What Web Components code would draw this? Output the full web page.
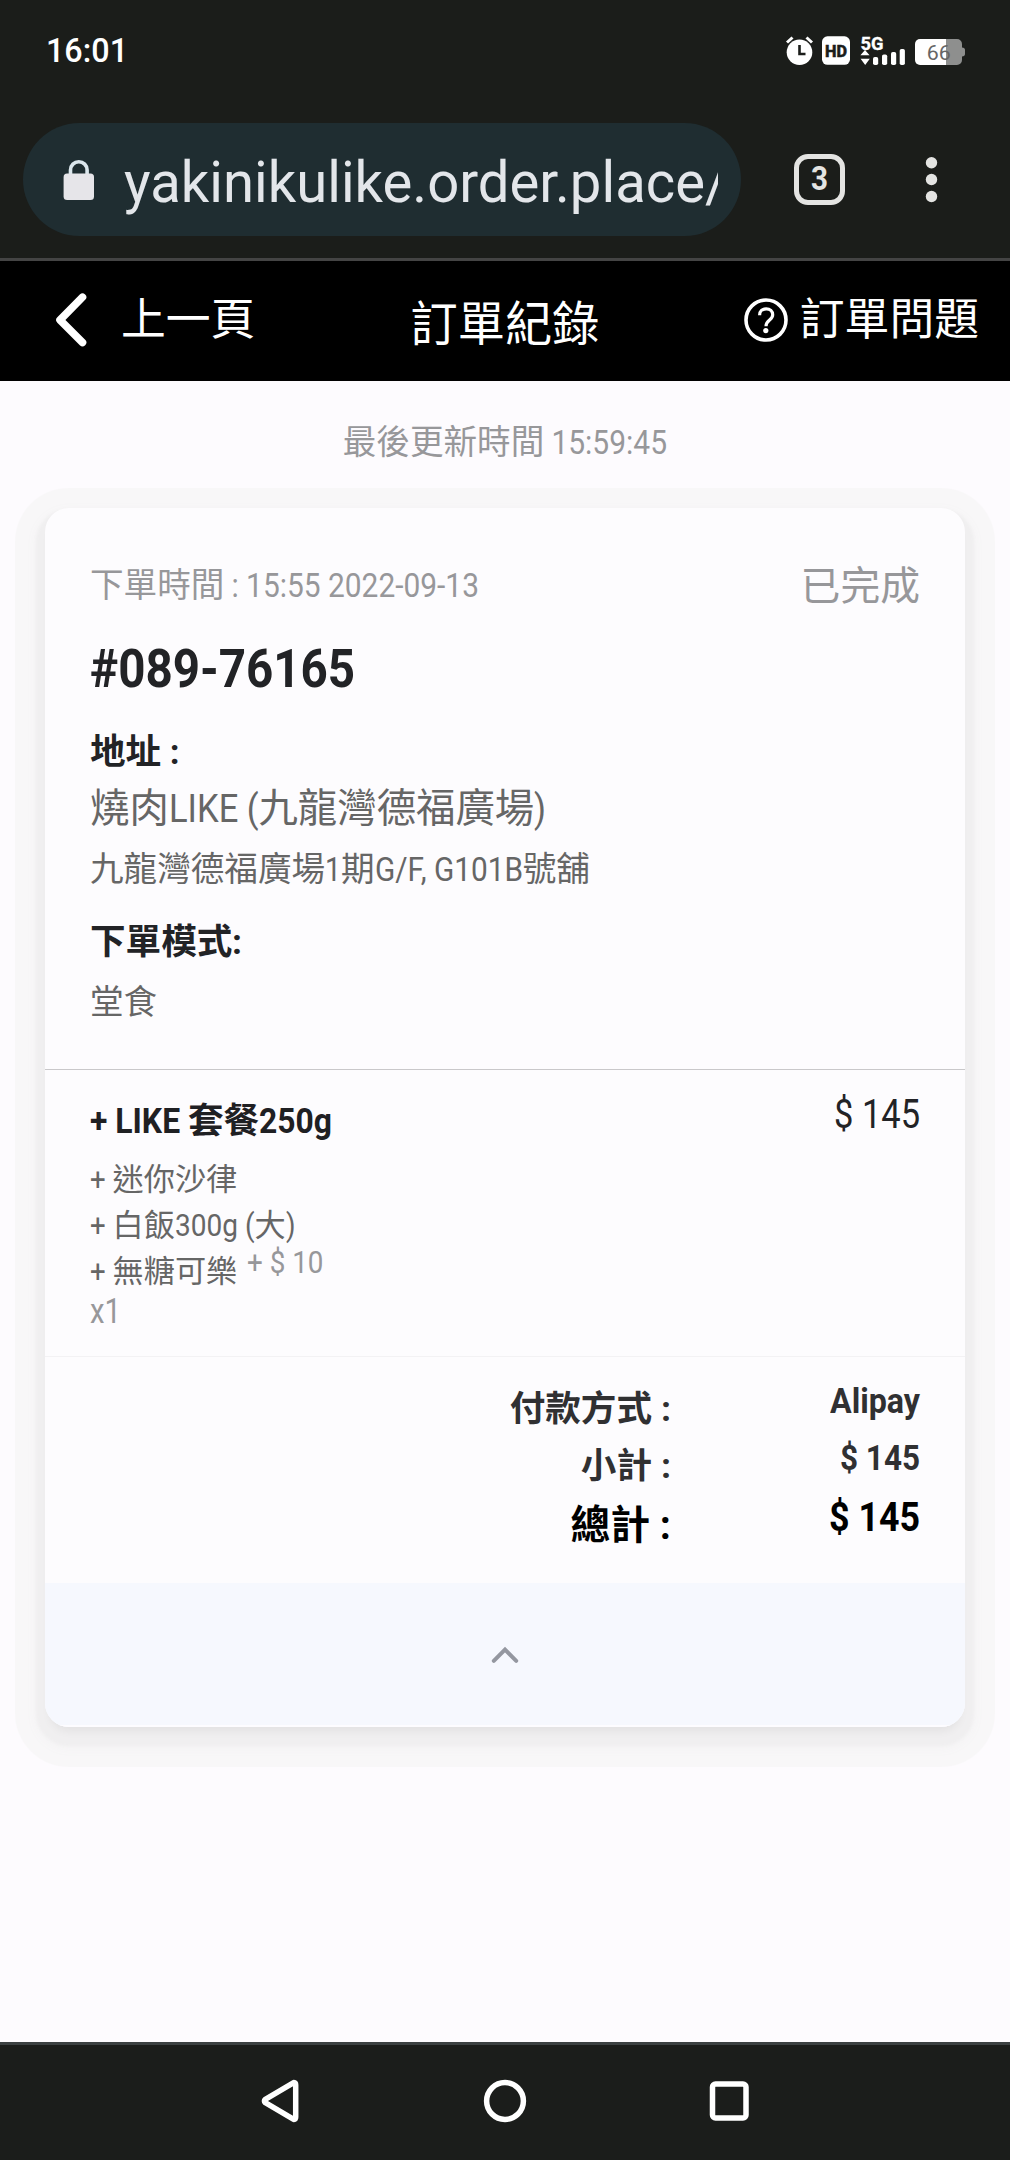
<!DOCTYPE html>
<html lang="zh-Hant">
<head>
<meta charset="utf-8">
<title>訂單紀錄</title>
<style>
  body {
    margin: 0;
    height: 2160px;
    display: flex;
    flex-direction: column;
    overflow: hidden;
    background: #fdfbfe;
    font-family: "Noto Sans CJK TC", Roboto, sans-serif;
  }

  main {
    flex: 1;
  }
</style>
</head>
<body>
  <status-bar time="16:01" battery="66"></status-bar>
  <browser-bar tabs="3">yakinikulike.order.place</browser-bar>
  <page-header>
    <span slot="back">上一頁</span>
    訂單紀錄
    <span slot="help">訂單問題</span>
  </page-header>

  <main>
    <update-time>最後更新時間<narrow-text w="123"> 15:59:45</narrow-text></update-time>

    <order-card>
      <order-info slot="info">
        <span slot="time">下單時間<narrow-text w="255"> : 15:55 2022-09-13</narrow-text></span>
        <span slot="status">已完成</span>
        <narrow-text slot="number" w="265">#089-76165</narrow-text>
        <span slot="address-label">地址<narrow-text w="18.5"> :</narrow-text></span>
        <span slot="shop">燒肉<narrow-text w="89.7">LIKE (</narrow-text>九龍灣德福廣場<narrow-text w="12">)</narrow-text></span>
        <span slot="address">九龍灣德福廣場<narrow-text w="16">1</narrow-text>期<narrow-text w="148">G/F, G101B</narrow-text>號舖</span>
        <span slot="mode-label">下單模式<narrow-text w="10">:</narrow-text></span>
        <span slot="mode">堂食</span>
      </order-info>

      <order-item slot="items">
        <span slot="name"><narrow-text w="98">+ LIKE </narrow-text>套餐<narrow-text w="73">250g</narrow-text></span>
        <div slot="option"><narrow-text w="22.5">+ </narrow-text>迷你沙律</div>
        <div slot="option"><narrow-text w="22.5">+ </narrow-text>白飯<narrow-text w="79.5">300g (</narrow-text>大<narrow-text w="9.5">)</narrow-text></div>
        <div slot="option"><narrow-text w="22.5">+ </narrow-text>無糖可樂<narrow-text class="extra" w="76.5">+ $ 10</narrow-text></div>
        <narrow-text slot="count" w="31">x1</narrow-text>
        <narrow-text slot="price" w="86">$ 145</narrow-text>
      </order-item>

      <order-totals slot="totals">
        <total-row>付款方式<narrow-text w="19"> :</narrow-text><narrow-text slot="value" w="90">Alipay</narrow-text></total-row>
        <total-row>小計<narrow-text w="19"> :</narrow-text><narrow-text slot="value" w="80">$ 145</narrow-text></total-row>
        <total-row strong>總計<narrow-text w="21"> :</narrow-text><narrow-text slot="value" w="91">$ 145</narrow-text></total-row>
      </order-totals>
    </order-card>
  </main>

  <nav-bar></nav-bar>

<script>
class StatusBar extends HTMLElement {
  constructor() {
    super();
    this.attachShadow({ mode: 'open' });
  }

  connectedCallback() {
    this.shadowRoot.innerHTML = `
      <style>
        :host {
          display: flex;
          justify-content: space-between;
          box-sizing: border-box;
          height: 100px;
          padding: 30px 44px 0 46px;
          background: #1b1d1a;
          color: #fff;
          font-family: Roboto, sans-serif;
        }
        .time {
          font-size: 34px;
          font-weight: 500;
          line-height: 40px;
        }
        svg {
          display: block;
        }
      </style>
      <div class="time"><narrow-text w="82">${this.getAttribute('time')}</narrow-text></div>
      <svg width="182" height="44" viewBox="784 30 182 44">
        <g fill="#fff">
          <circle cx="799.5" cy="52.2" r="12.8"/>
          <path d="M787 42.5l5.5-5M812 42.5l-5.5-5" stroke="#fff" stroke-width="3"/>
          <path d="M799.5 45v9h6" fill="none" stroke="#1b1d1a" stroke-width="2.6"/>
          <rect x="822" y="36.3" width="28" height="28.5" rx="5.5"/>
          <text x="825" y="56.8" font-size="16.5" font-weight="800" fill="#1b1d1a" stroke="#1b1d1a" stroke-width=".5" textLength="22" lengthAdjust="spacingAndGlyphs">HD</text>
          <text x="860.5" y="50" font-size="18" font-weight="700" stroke="#fff" stroke-width=".3" textLength="23" lengthAdjust="spacingAndGlyphs">5G</text>
          <path d="M865 50l4.6 5.2h-9.2zM860.6 58.8h9.2L865.2 65z"/>
          <rect x="873" y="57" width="5.2" height="8" rx="1.8"/>
          <rect x="882" y="54.5" width="5.2" height="10.5" rx="1.8"/>
          <rect x="891" y="52" width="5.2" height="13" rx="1.8"/>
          <rect x="899.7" y="49" width="5.2" height="16" rx="1.8"/>
          <path d="M920 39h26.5v26H920a5 5 0 0 1-5-5V44a5 5 0 0 1 5-5z"/>
          <path d="M946.5 39H957a5 5 0 0 1 5 5v3.5c2 0 3 1 3 2.5v4c0 1.5-1 2.5-3 2.5V60a5 5 0 0 1-5 5h-10.5z" fill="#8e8f8e"/>
          <text x="926.8" y="59.6" font-size="21" fill="#666" textLength="24" lengthAdjust="spacingAndGlyphs">${this.getAttribute('battery')}</text>
        </g>
      </svg>
    `;
  }
}

class BrowserBar extends HTMLElement {
  constructor() {
    super();
    this.attachShadow({ mode: 'open' });
  }

  connectedCallback() {
    this.shadowRoot.innerHTML = `
      <style>
        :host {
          display: flex;
          align-items: flex-start;
          box-sizing: border-box;
          height: 161px;
          padding: 23px 0 0 23px;
          border-bottom: 3px solid #444;
          background: #1b1d1a;
          color: #e3e6ea;
          font-family: Roboto, sans-serif;
        }
        .box {
          display: flex;
          align-items: center;
          box-sizing: border-box;
          width: 718px;
          height: 113px;
          padding: 0 23px 0 40px;
          border-radius: 57px;
          background: #1f2d31;
        }
        .url {
          flex: 1;
          margin-left: 29px;
          overflow: hidden;
          white-space: nowrap;
          font-size: 56.5px;
          line-height: 74px;
          padding-top: 6px;
        }
        .tabs {
          display: flex;
          justify-content: center;
          box-sizing: border-box;
          width: 51px;
          height: 51px;
          margin: 31px 0 0 53px;
          padding-top: 3px;
          border: 5.5px solid #e4e4e2;
          border-radius: 14px;
          color: #e4e4e2;
          font-size: 33px;
          font-weight: 700;
          line-height: 40px;
        }
        .menu {
          margin: 31px 0 0 80px;
        }
        svg {
          display: block;
        }
      </style>
      <div class="box">
        <svg width="32" height="42" viewBox="0 0 32 42">
          <path d="M7.500 16V11a8.300 8.300 0 0 1 16.600 0v5" fill="none" stroke="#dbe6ec" stroke-width="3.600"/>
          <rect x=".6" y="14.5" width="30.4" height="26.5" rx="3.5" fill="#e6e5e9"/>
        </svg>
        <div class="url"><narrow-text w="581"><slot></slot></narrow-text>/</div>
      </div>
      <div class="tabs"><narrow-text w="17">${this.getAttribute('tabs')}</narrow-text></div>
      <svg class="menu" width="14" height="52" viewBox="0 0 14 52" fill="#e4e4e2">
        <circle cx="6.5" cy="8.7" r="5.7"/>
        <circle cx="6.5" cy="25.5" r="5.7"/>
        <circle cx="6.5" cy="42.5" r="5.7"/>
      </svg>
    `;
  }
}

class PageHeader extends HTMLElement {
  constructor() {
    super();
    this.attachShadow({ mode: 'open' });
  }

  connectedCallback() {
    this.shadowRoot.innerHTML = `
      <style>
        :host {
          display: grid;
          grid-template-columns: 1fr auto 1fr;
          align-items: center;
          box-sizing: border-box;
          height: 120px;
          padding: 0 31px 0 54px;
          background: #000;
          color: #fff;
          font-size: 44.8px;
          line-height: 60px;
          white-space: nowrap;
        }
        .back, .help {
          display: flex;
          align-items: center;
          margin-top: -10px;
        }
        .back svg {
          margin: 8px 32px 0 0;
        }
        .help {
          justify-content: flex-end;
        }
        .help svg {
          margin: 8px 12px 0 0;
        }
        .title {
          margin-right: 23px;
          font-size: 47.2px;
        }
      </style>
      <div class="back">
        <svg width="35" height="58" viewBox="54 291 35 58">
          <path d="M82.5 297.2L60 320l22.5 22.5" fill="none" stroke="#fff" stroke-width="7.6" stroke-linecap="round" stroke-linejoin="round"/>
        </svg>
        <slot name="back"></slot>
      </div>
      <div class="title"><slot></slot></div>
      <div class="help">
        <svg width="44" height="44" viewBox="0 0 44 44" fill="none" stroke="#fff">
          <circle cx="22" cy="22" r="20" stroke-width="3.6"/>
          <path d="M15.600 17.200c0-4 2.800-6.400 6.600-6.400s6.500 2.500 6.500 5.900c0 5.500-6.700 5-6.700 11.500" stroke-width="3.2"/>
          <circle cx="21.8" cy="32.6" r="2.6" fill="#fff" stroke="none"/>
        </svg>
        <slot name="help"></slot>
      </div>
    `;
  }
}

class UpdateTime extends HTMLElement {
  constructor() {
    super();
    this.attachShadow({ mode: 'open' });
  }

  connectedCallback() {
    this.shadowRoot.innerHTML = `
      <style>
        :host {
          display: block;
          padding: 35px 0 44px;
          text-align: center;
          color: #97979a;
          font-size: 33.6px;
          line-height: 48px;
        }
      </style>
      <slot></slot>
    `;
  }
}

class OrderCard extends HTMLElement {
  constructor() {
    super();
    this.attachShadow({ mode: 'open' });
  }

  connectedCallback() {
    this.shadowRoot.innerHTML = `
      <style>
        :host {
          display: block;
          width: 920px;
          margin: 0 auto;
          border-radius: 24px;
          overflow: hidden;
          background: #fdfcfe;
          box-shadow:
            0 9px 10px -5px rgba(0, 0, 0, .06),
            0 10px 3px 9px #f0eff0,
            0 12px 12px 9px #f3f2f3,
            0 10px 1px 30px #f8f7f8;
        }
        .toggle {
          display: flex;
          justify-content: center;
          box-sizing: border-box;
          height: 144px;
          padding-top: 62px;
          border-bottom: 2px solid #fdfcff;
          background: #f6f8fe;
        }
      </style>
      <slot name="info"></slot>
      <slot name="items"></slot>
      <slot name="totals"></slot>
      <div class="toggle">
        <svg width="30" height="20" viewBox="0 0 30 20">
          <path d="M3.800 15.800L15 4.600l11.200 11.200" fill="none" stroke="#9497a0" stroke-width="4" stroke-linecap="round"/>
        </svg>
      </div>
    `;
  }
}

class OrderInfo extends HTMLElement {
  constructor() {
    super();
    this.attachShadow({ mode: 'open' });
  }

  connectedCallback() {
    this.shadowRoot.innerHTML = `
      <style>
        :host {
          display: block;
          box-sizing: border-box;
          height: 562px;
          padding: 51px 45px 0;
          border-bottom: 1px solid #c9c8ca;
          color: #666;
          font-size: 33.6px;
          line-height: 48px;
          white-space: nowrap;
        }
        .top {
          display: flex;
          justify-content: space-between;
          color: #97979a;
        }
        .status {
          font-size: 39.8px;
        }
        .number {
          margin-top: 22px;
          color: #222326;
          font-size: 52.8px;
          font-weight: 700;
          line-height: 70px;
        }
        .label {
          margin-top: 26px;
          color: #222326;
          font-size: 35.6px;
          font-weight: 700;
        }
        .mode {
          margin-top: 24px;
        }
        .shop {
          margin-top: 5px;
          font-size: 39.4px;
          line-height: 54px;
        }
        .text {
          margin-top: 11px;
        }
        .mode + .text {
          margin-top: 13px;
        }
      </style>
      <div class="top">
        <div><slot name="time"></slot></div>
        <div class="status"><slot name="status"></slot></div>
      </div>
      <div class="number"><slot name="number"></slot></div>
      <div class="label"><slot name="address-label"></slot></div>
      <div class="shop"><slot name="shop"></slot></div>
      <div class="text"><slot name="address"></slot></div>
      <div class="label mode"><slot name="mode-label"></slot></div>
      <div class="text"><slot name="mode"></slot></div>
    `;
  }
}

class OrderItem extends HTMLElement {
  constructor() {
    super();
    this.attachShadow({ mode: 'open' });
  }

  connectedCallback() {
    this.shadowRoot.innerHTML = `
      <style>
        :host {
          display: flex;
          justify-content: space-between;
          box-sizing: border-box;
          height: 287px;
          padding: 17px 45px 0;
          border-bottom: 1px solid #f3f2f4;
          color: #666;
          white-space: nowrap;
        }
        .name {
          margin: 7px 0 12px;
          color: #1f2023;
          font-size: 35.6px;
          font-weight: 700;
          line-height: 48px;
        }
        .options {
          font-size: 31.2px;
          line-height: 46px;
        }
        .count {
          margin-top: -4px;
          color: #97979a;
          font-size: 35px;
          line-height: 40px;
        }
        .price {
          color: #222326;
          font-size: 39.8px;
          line-height: 48px;
        }
        ::slotted(div) {
          height: 46px;
        }
      </style>
      <div>
        <div class="name"><slot name="name"></slot></div>
        <div class="options"><slot name="option"></slot></div>
        <div class="count"><slot name="count"></slot></div>
      </div>
      <div class="price"><slot name="price"></slot></div>
    `;
  }
}

class OrderTotals extends HTMLElement {
  constructor() {
    super();
    this.attachShadow({ mode: 'open' });
  }

  connectedCallback() {
    this.shadowRoot.innerHTML = `
      <style>
        :host {
          display: block;
          box-sizing: border-box;
          height: 226px;
          padding: 20px 45px 0;
        }
      </style>
      <slot></slot>
    `;
  }
}

class TotalRow extends HTMLElement {
  constructor() {
    super();
    this.attachShadow({ mode: 'open' });
  }

  connectedCallback() {
    this.shadowRoot.innerHTML = `
      <style>
        :host {
          display: grid;
          grid-template-columns: 581px 1fr;
          height: 57.3px;
          text-align: right;
          color: #303032;
          font-size: 35.6px;
          font-weight: 700;
          line-height: 57px;
          white-space: nowrap;
        }
        :host([strong]) {
          height: 60px;
          padding-top: 1px;
          color: #000;
          font-size: 39.8px;
        }
        .value {
          margin-top: -8px;
        }
      </style>
      <div><slot></slot></div>
      <div class="value"><slot name="value"></slot></div>
    `;
  }
}

class NavBar extends HTMLElement {
  constructor() {
    super();
    this.attachShadow({ mode: 'open' });
  }

  connectedCallback() {
    this.shadowRoot.innerHTML = `
      <style>
        :host {
          display: flex;
          justify-content: center;
          gap: 180px;
          box-sizing: border-box;
          height: 118px;
          padding-top: 34px;
          border-top: 3px solid #3b4041;
          background: #1b1d1b;
        }
        svg {
          fill: none;
          stroke: #fff;
          stroke-width: 5.5;
          stroke-linejoin: round;
        }
      </style>
      <svg width="44" height="44" viewBox="0 0 44 44"><path d="M6.300 20.300L34.700 3.600Q36.700 3.800 36.700 6V38Q36.700 40.200 34.700 40.400L6.300 23.700Q4.500 22 6.300 20.300z"/></svg>
      <svg width="44" height="44" viewBox="0 0 44 44"><circle cx="22" cy="22" r="18.4"/></svg>
      <svg width="44" height="44" viewBox="0 0 44 44"><rect x="5.5" y="5" width="33.5" height="34" rx="3"/></svg>
    `;
  }
}

// Condensed run of latin text, squeezed to the advance given in "w"
class NarrowText extends HTMLElement {
  constructor() {
    super();
    this.attachShadow({ mode: 'open' });
  }

  connectedCallback() {
    // no whitespace around the span, it would count under white-space: pre
    this.shadowRoot.innerHTML = `<style>
        :host {
          display: inline-block;
          text-align: left;
          font-family: Roboto, sans-serif;
          line-height: 1;
          white-space: pre;
        }
        :host(.extra) {
          margin-left: 10px;
          vertical-align: 9px;
          color: #97979a;
        }
        span {
          display: inline-block;
          transform-origin: 0 0;
        }
      </style><span><slot></slot></span>`;
    const span = this.shadowRoot.querySelector('span');
    const w = Number(this.getAttribute('w'));
    const natural = span.getBoundingClientRect().width;
    this.style.width = w + 'px';
    span.style.transform = `scaleX(${w / natural})`;
  }
}

customElements.define('status-bar', StatusBar);
customElements.define('browser-bar', BrowserBar);
customElements.define('page-header', PageHeader);
customElements.define('update-time', UpdateTime);
customElements.define('order-card', OrderCard);
customElements.define('order-info', OrderInfo);
customElements.define('order-item', OrderItem);
customElements.define('order-totals', OrderTotals);
customElements.define('total-row', TotalRow);
customElements.define('nav-bar', NavBar);
customElements.define('narrow-text', NarrowText);
</script>
</body>
</html>
